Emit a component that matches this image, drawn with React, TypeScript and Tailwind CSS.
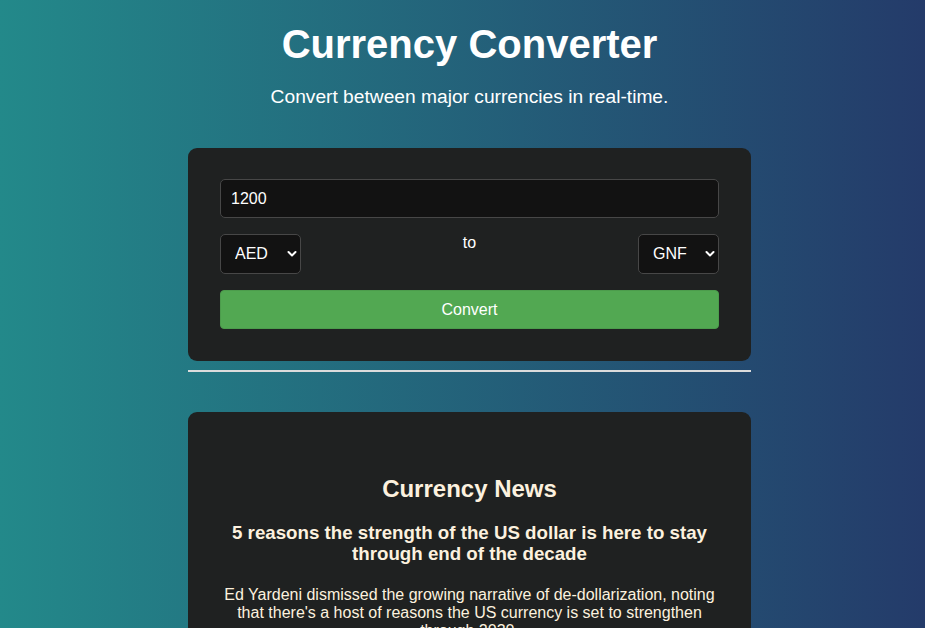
import React from "react";

function Chevron() {
  return (
    <svg
      className="pointer-events-none absolute right-[4px] top-1/2 -translate-y-1/2"
      width="10"
      height="7"
      viewBox="0 0 10 7"
      fill="none"
    >
      <path d="M1.5 1.5 L5 5 L8.5 1.5" stroke="#ffffff" strokeWidth="2" strokeLinecap="round" strokeLinejoin="round" />
    </svg>
  );
}

function CurrencySelect({ value, options }: { value: string; options: string[] }) {
  return (
    <div className="relative w-[81px] h-[40px]">
      <select
        defaultValue={value}
        className="appearance-none w-full h-full rounded-[5px] border border-[#474747] bg-[#121212] pl-[14px] pr-[18px] text-[16px] text-white outline-none"
      >
        {options.map((o) => (
          <option key={o} value={o}>
            {o}
          </option>
        ))}
      </select>
      <Chevron />
    </div>
  );
}

export default function App() {
  return (
    <div
      className="min-h-screen w-full bg-[linear-gradient(to_right,#23898a,#243b6a)] text-white"
      style={{ fontFamily: '"Liberation Sans", Arial, sans-serif' }}
    >
      <div className="flex flex-col items-center pt-[21px] pl-[14px]">
        <h1 className="text-[40px] leading-[46px] font-bold text-white">Currency Converter</h1>
        <p className="mt-[19px] text-[19.2px] leading-[22px] text-white">
          Convert between major currencies in real-time.
        </p>

        <div className="mt-[40px] w-[563px] flex flex-col">
          <div className="rounded-[9px] bg-[#1f2121] px-[32px] pt-[31px] pb-[32px] flex flex-col">
            <input
              defaultValue="1200"
              className="h-[39px] w-full rounded-[5px] border border-[#474747] bg-[#121212] px-[10px] text-[16px] text-white outline-none"
            />
            <div className="mt-[16px] flex items-start justify-between">
              <CurrencySelect value="AED" options={["AED", "USD", "EUR"]} />
              <span className="text-[16px] leading-[18px] text-white">to</span>
              <CurrencySelect value="GNF" options={["GNF", "USD", "EUR"]} />
            </div>
            <button className="mt-[16px] h-[39px] w-full rounded-[4px] border border-[#4c9c4c] bg-[#52a852] text-[16px] text-white">
              Convert
            </button>
          </div>

          <div className="mt-[9px] h-[2px] w-full bg-[#dcdcdc]" />

          <div className="mt-[40px] rounded-[9px] bg-[#1f2121] px-[32px] pt-[63px] pb-[32px] flex flex-col items-center text-center text-[#fcf1df]">
            <h2 className="text-[24px] leading-[27.6px] font-bold">Currency News</h2>
            <h3 className="mt-[19px] text-[18.72px] leading-[21.5px] font-bold">
              5 reasons the strength of the US dollar is here to stay through end of the decade
            </h3>
            <p className="mt-[21px] text-[16px] leading-[18px]">
              Ed Yardeni dismissed the growing narrative of de-dollarization, noting that there's a host of
              reasons the US currency is set to strengthen through 2030.
            </p>
          </div>
        </div>
      </div>
    </div>
  );
}
